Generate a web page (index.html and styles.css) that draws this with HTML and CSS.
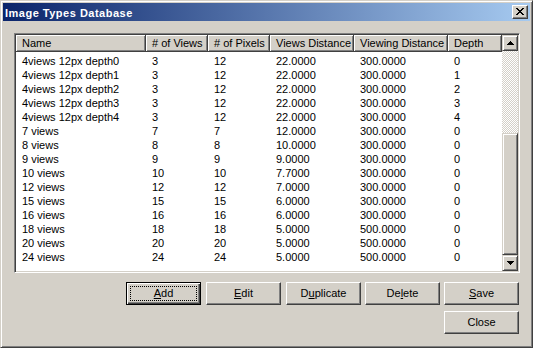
FILE: index.html
```html
<!DOCTYPE html>
<html>
<head>
<meta charset="utf-8">
<link rel="stylesheet" href="styles.css">
</head>
<body>
<div class="window">
  <div class="titlebar">
    <span class="title">Image Types Database</span>
    <div class="close-btn">
      <svg width="8" height="7" viewBox="0 0 8 7" shape-rendering="crispEdges">
        <path d="M0 0h2v1H0zM6 0h2v1H6zM1 1h2v1H1zM5 1h2v1H5zM2 2h4v1H2zM3 3h2v1H3zM2 4h4v1H2zM1 5h2v1H1zM5 5h2v1H5zM0 6h2v1H0zM6 6h2v1H6z" fill="#000"/>
      </svg>
    </div>
  </div>
  <div class="client">
    <div class="listbox">
      <div class="list-main">
        <div class="lv-header">
          <div class="hcell">Name</div>
          <div class="hcell"># of Views</div>
          <div class="hcell"># of Pixels</div>
          <div class="hcell">Views Distance</div>
          <div class="hcell">Viewing Distance</div>
          <div class="hcell">Depth</div>
        </div>
        <div class="lv-rows">
          <div class="row"><span>4views 12px depth0</span><span>3</span><span>12</span><span>22.0000</span><span>300.0000</span><span>0</span></div>
          <div class="row"><span>4views 12px depth1</span><span>3</span><span>12</span><span>22.0000</span><span>300.0000</span><span>1</span></div>
          <div class="row"><span>4views 12px depth2</span><span>3</span><span>12</span><span>22.0000</span><span>300.0000</span><span>2</span></div>
          <div class="row"><span>4views 12px depth3</span><span>3</span><span>12</span><span>22.0000</span><span>300.0000</span><span>3</span></div>
          <div class="row"><span>4views 12px depth4</span><span>3</span><span>12</span><span>22.0000</span><span>300.0000</span><span>4</span></div>
          <div class="row"><span>7 views</span><span>7</span><span>7</span><span>12.0000</span><span>300.0000</span><span>0</span></div>
          <div class="row"><span>8 views</span><span>8</span><span>8</span><span>10.0000</span><span>300.0000</span><span>0</span></div>
          <div class="row"><span>9 views</span><span>9</span><span>9</span><span>9.0000</span><span>300.0000</span><span>0</span></div>
          <div class="row"><span>10 views</span><span>10</span><span>10</span><span>7.7000</span><span>300.0000</span><span>0</span></div>
          <div class="row"><span>12 views</span><span>12</span><span>12</span><span>7.0000</span><span>300.0000</span><span>0</span></div>
          <div class="row"><span>15 views</span><span>15</span><span>15</span><span>6.0000</span><span>300.0000</span><span>0</span></div>
          <div class="row"><span>16 views</span><span>16</span><span>16</span><span>6.0000</span><span>300.0000</span><span>0</span></div>
          <div class="row"><span>18 views</span><span>18</span><span>18</span><span>5.0000</span><span>500.0000</span><span>0</span></div>
          <div class="row"><span>20 views</span><span>20</span><span>20</span><span>5.0000</span><span>500.0000</span><span>0</span></div>
          <div class="row"><span>24 views</span><span>24</span><span>24</span><span>5.0000</span><span>500.0000</span><span>0</span></div>
        </div>
      </div>
      <div class="vscroll">
        <div class="sb-btn">
          <svg width="7" height="4" viewBox="0 0 7 4" shape-rendering="crispEdges"><path d="M3 0h1v1H3zM2 1h3v1H2zM1 2h5v1H1zM0 3h7v1H0z" fill="#000"/></svg>
        </div>
        <div class="sb-track"></div>
        <div class="sb-thumb"></div>
        <div class="sb-btn">
          <svg width="7" height="4" viewBox="0 0 7 4" shape-rendering="crispEdges"><path d="M0 0h7v1H0zM1 1h5v1H1zM2 2h3v1H2zM3 3h1v1H3z" fill="#000"/></svg>
        </div>
      </div>
    </div>
    <div class="btn-row">
      <div class="btn default g5"><u>A</u>dd</div>
      <div class="btn g5"><u>E</u>dit</div>
      <div class="btn">D<u>u</u>plicate</div>
      <div class="btn">De<u>l</u>ete</div>
      <div class="btn"><u>S</u>ave</div>
    </div>
    <div class="btn-row second">
      <div class="btn">Close</div>
    </div>
  </div>
</div>
</body>
</html>
```

FILE: styles.css
```css
* { box-sizing: border-box; }
html, body { margin: 0; padding: 0; }
body {
  background: #d4d0c8;
  font-family: "Liberation Sans", Arial, sans-serif;
  font-size: 11px;
  color: #000;
}
.window {
  width: 533px;
  height: 348px;
  border: 1px solid;
  border-color: #d4d0c8 #404040 #404040 #d4d0c8;
  box-shadow: inset 1px 1px #fff, inset -1px -1px #808080;
  padding: 2px;
  background: #d4d0c8;
  display: flex;
  flex-direction: column;
}
.titlebar {
  height: 18px;
  flex: none;
  background: linear-gradient(to right, #0a246a, #a6caf0);
  display: flex;
  align-items: center;
  padding: 0 2px;
}
.title {
  flex: 1;
  color: #fff;
  font-weight: bold;
  font-size: 11px;
  letter-spacing: 0.5px;
  line-height: 18px;
  padding-top: 1px;
}
.close-btn {
  width: 16px;
  height: 14px;
  background: #d4d0c8;
  border: 1px solid;
  border-color: #fff #404040 #404040 #fff;
  box-shadow: inset -1px -1px #808080;
  display: flex;
  align-items: center;
  justify-content: center;
  padding: 0 1px 1px 0;
}
.close-btn svg { display: block; }
.client {
  flex: 1;
  display: flex;
  flex-direction: column;
  padding: 12px 10px 0 11px;
}
.listbox {
  height: 240px;
  flex: none;
  border: 1px solid;
  border-color: #808080 #fff #fff #808080;
  padding: 1px;
  box-shadow: inset 1px 1px #404040, inset -1px -1px #d4d0c8;
  display: flex;
  background: #fff;
}
.list-main {
  flex: 1;
  display: flex;
  flex-direction: column;
  background: #fff;
  overflow: hidden;
}
.lv-header, .row {
  display: grid;
  grid-template-columns: 130px 62px 62px 84px 94px 54px;
}
.lv-header { height: 17px; flex: none; }
.hcell {
  background: #d4d0c8;
  border-right: 1px solid #404040;
  border-bottom: 1px solid #404040;
  box-shadow: inset 1px 1px #fff, inset -1px -1px #808080;
  padding-left: 6px;
  line-height: 16px;
  white-space: nowrap;
  overflow: hidden;
}
.lv-rows { padding-top: 2px; }
.row { height: 14px; line-height: 14px; }
.row span { padding-left: 6px; white-space: nowrap; overflow: hidden; }
.vscroll {
  width: 16px;
  flex: none;
  display: flex;
  flex-direction: column;
}
.sb-btn, .sb-thumb {
  background: #d4d0c8;
  border: 1px solid;
  border-color: #d4d0c8 #404040 #404040 #d4d0c8;
  box-shadow: inset 1px 1px #fff, inset -1px -1px #808080;
}
.sb-btn {
  height: 16px;
  flex: none;
  display: flex;
  align-items: center;
  justify-content: center;
}
.sb-btn svg { display: block; }
.sb-track {
  flex: 1;
  background: repeating-conic-gradient(#fff 0 25%, #d4d0c8 0 50%) 0 0 / 2px 2px;
}
.sb-thumb { height: 122px; flex: none; }
.btn-row {
  display: flex;
  justify-content: flex-end;
  gap: 4px;
  margin-top: 9px;
  padding-right: 1px;
}
.btn-row.second { margin-top: 6px; }
.btn {
  width: 75px;
  height: 23px;
  background: #d4d0c8;
  border: 1px solid;
  border-color: #fff #404040 #404040 #fff;
  box-shadow: inset -1px -1px #808080;
  display: flex;
  align-items: center;
  justify-content: center;
  font-size: 11px;
  line-height: 13px;
  padding-bottom: 1px;
}
.btn.g5 { margin-right: 1px; }
.btn.default {
  border-color: #000;
  box-shadow: inset 1px 1px #fff, inset -1px -1px #404040, inset -2px -2px #808080;
  position: relative;
}
.btn.default::after {
  content: "";
  position: absolute;
  inset: 3px;
  border: 1px dotted #000;
}
u { text-decoration: underline; text-underline-offset: 1px; }
```
